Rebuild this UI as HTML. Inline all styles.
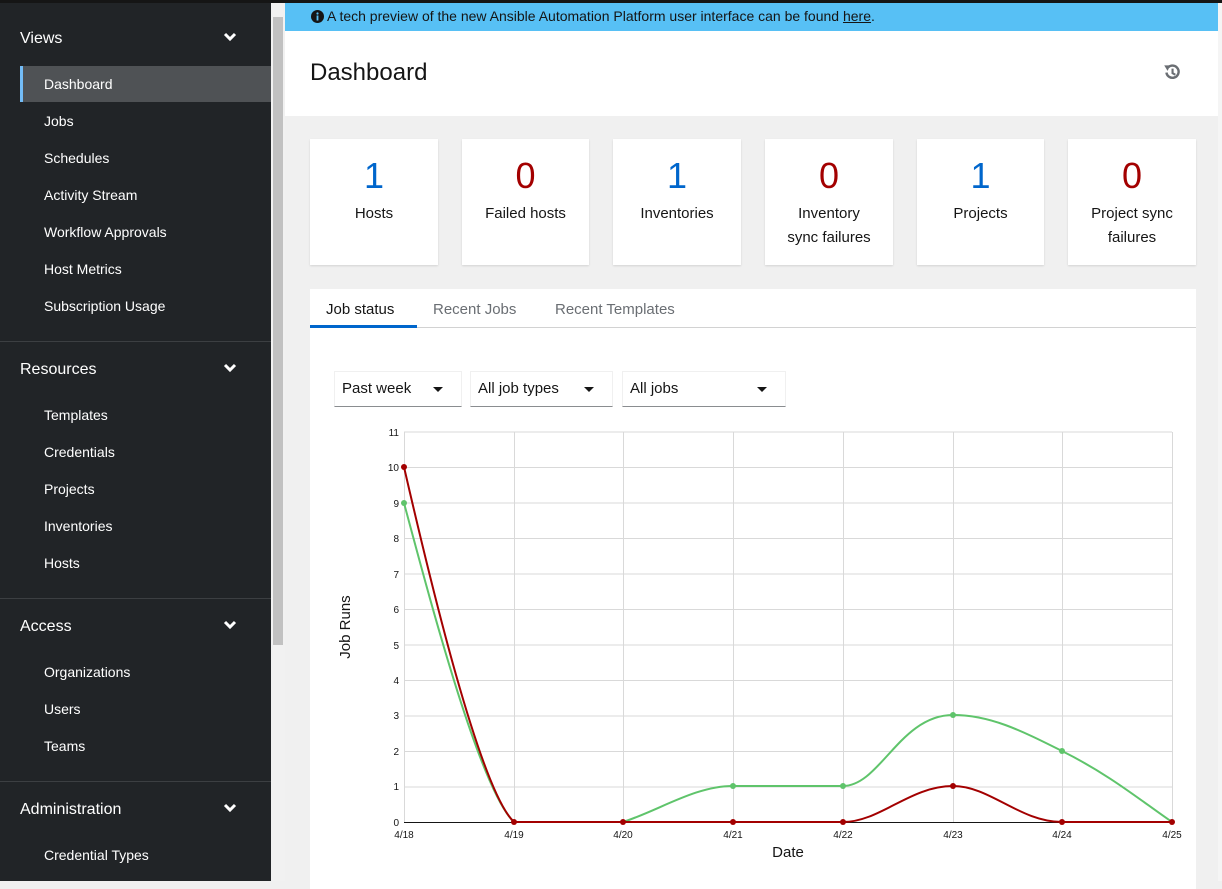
<!DOCTYPE html><html><head><style>
*{box-sizing:border-box;margin:0;padding:0}
body{width:1222px;height:881px;overflow:hidden;background:#f0f0f0;font-family:"Liberation Sans",sans-serif;position:relative}
.topbar{position:absolute;left:0;top:0;width:1222px;height:3px;background:#151515}
.side{position:absolute;left:0;top:3px;width:271px;height:878px;background:#212427;color:#fff}
.sb{position:absolute;left:271px;top:3px;width:14px;height:878px;background:#f1f1f1}
.sb div{position:absolute;left:2px;top:14px;width:10px;height:628px;background:#c1c1c1}
.hd{position:absolute;left:20px;font-size:16px;color:#fff}
.chev{position:absolute;left:223px;width:14px;height:10px}
.it{position:absolute;left:44px;font-size:14px;color:#fff}
.sep{position:absolute;left:0;width:271px;height:1px;background:#3c3f42}
.act{position:absolute;left:20px;top:63px;width:251px;height:36px;background:#4f5255;border-left:3px solid #73bcf7}
.banner{position:absolute;left:285px;top:3px;width:933px;height:28px;background:#57c0f5;font-size:14px;color:#151515;padding:5px 0 0 26px}
.head{position:absolute;left:285px;top:31px;width:933px;height:85px;background:#fff}
.head h1{position:absolute;left:25px;top:28px;font-size:24px;font-weight:normal;color:#151515}
.card{position:absolute;top:139px;height:126px;background:#fff;box-shadow:0 1px 2px rgba(0,0,0,.12);text-align:center;font-size:15px;color:#151515}
.card .n{font-size:36px;font-weight:300;margin-top:15px;height:44px;line-height:44px}
.card .l{line-height:24px;margin-top:4px}
.blue{color:#0066cc}.red{color:#a30000}
.panel{position:absolute;left:310px;top:289px;width:886px;height:600px;background:#fff}
.tab{position:absolute;top:12px;font-size:15px;color:#6a6e73}
.sel{position:absolute;top:82px;height:36px;border:1px solid #f0f0f0;border-bottom:1px solid #8a8d90;font-size:15px;color:#151515;padding:8px 0 0 7px}
.car{position:absolute;top:15px;width:0;height:0;border-left:5px solid transparent;border-right:5px solid transparent;border-top:5px solid #151515}
</style></head><body>
<div class="topbar"></div>
<div class="side">
<div class="hd" style="top:27px">Views</div>
<svg class="chev" style="top:29px" viewBox="0 0 14 10"><path d="M2 2L7 7 12 2" stroke="#fff" stroke-width="3" fill="none"/></svg>
<div class="act"></div>
<div class="it" style="top:73px">Dashboard</div>
<div class="it" style="top:110px">Jobs</div>
<div class="it" style="top:147px">Schedules</div>
<div class="it" style="top:184px">Activity Stream</div>
<div class="it" style="top:221px">Workflow Approvals</div>
<div class="it" style="top:258px">Host Metrics</div>
<div class="it" style="top:295px">Subscription Usage</div>
<div class="sep" style="top:338px"></div>
<div class="hd" style="top:358px">Resources</div>
<svg class="chev" style="top:360px" viewBox="0 0 14 10"><path d="M2 2L7 7 12 2" stroke="#fff" stroke-width="3" fill="none"/></svg>
<div class="it" style="top:404px">Templates</div>
<div class="it" style="top:441px">Credentials</div>
<div class="it" style="top:478px">Projects</div>
<div class="it" style="top:515px">Inventories</div>
<div class="it" style="top:552px">Hosts</div>
<div class="sep" style="top:595px"></div>
<div class="hd" style="top:615px">Access</div>
<svg class="chev" style="top:617px" viewBox="0 0 14 10"><path d="M2 2L7 7 12 2" stroke="#fff" stroke-width="3" fill="none"/></svg>
<div class="it" style="top:661px">Organizations</div>
<div class="it" style="top:698px">Users</div>
<div class="it" style="top:735px">Teams</div>
<div class="sep" style="top:778px"></div>
<div class="hd" style="top:798px">Administration</div>
<svg class="chev" style="top:800px" viewBox="0 0 14 10"><path d="M2 2L7 7 12 2" stroke="#fff" stroke-width="3" fill="none"/></svg>
<div class="it" style="top:844px">Credential Types</div>
</div>
<div class="sb"><div></div></div>
<div class="banner"><svg style="position:absolute;left:26px;top:7px" width="13" height="13" viewBox="0 0 13 13"><circle cx="6.5" cy="6.5" r="6.5" fill="#151515"/><rect x="5.6" y="5.5" width="1.8" height="5" fill="#57c0f5"/><circle cx="6.5" cy="3.5" r="1.1" fill="#57c0f5"/></svg><span style="margin-left:16px">A tech preview of the new Ansible Automation Platform user interface can be found <u>here</u>.</span></div>
<div style="position:absolute;left:1218px;top:3px;width:4px;height:878px;background:#f5f5f5"></div>
<div class="head"><h1>Dashboard</h1>
<svg style="position:absolute;left:877px;top:31px" width="20" height="20" viewBox="0 0 18 18"><path d="M4 9.5A5.5 5.5 0 1 0 5.8 4.6" stroke="#6a6e73" stroke-width="2.2" fill="none"/><path d="M2 3L7.5 3 5 8Z" fill="#6a6e73"/><path d="M9.5 6V10L12 11.5" stroke="#6a6e73" stroke-width="1.9" fill="none"/></svg></div>
<div class="card" style="left:310px;width:128px"><div class="n blue">1</div><div class="l">Hosts</div></div>
<div class="card" style="left:462px;width:127px"><div class="n red">0</div><div class="l">Failed hosts</div></div>
<div class="card" style="left:613px;width:128px"><div class="n blue">1</div><div class="l">Inventories</div></div>
<div class="card" style="left:765px;width:128px"><div class="n red">0</div><div class="l">Inventory<br>sync failures</div></div>
<div class="card" style="left:917px;width:127px"><div class="n blue">1</div><div class="l">Projects</div></div>
<div class="card" style="left:1068px;width:128px"><div class="n red">0</div><div class="l">Project sync<br>failures</div></div>
<div class="panel">
<div class="tab" style="left:16px;color:#151515">Job status</div>
<div class="tab" style="left:123px">Recent Jobs</div>
<div class="tab" style="left:245px">Recent Templates</div>
<div style="position:absolute;left:0;top:38px;width:886px;height:1px;background:#d2d2d2"></div>
<div style="position:absolute;left:0;top:36px;width:107px;height:3px;background:#0066cc"></div>
<div class="sel" style="left:24px;width:128px">Past week<div class="car" style="left:98px"></div></div>
<div class="sel" style="left:132px;width:171px;left:160px;width:143px">All job types<div class="car" style="left:113px"></div></div>
<div class="sel" style="left:312px;width:164px">All jobs<div class="car" style="left:134px"></div></div>
</div>
<svg style="position:absolute;left:0;top:0" width="1222" height="881">
<g stroke="#d9d9d9" stroke-width="1">
<path d="M404 432H1172M404 467.5H1172M404 503H1172M404 538.5H1172M404 574H1172M404 609.5H1172M404 645H1172M404 680.5H1172M404 716H1172M404 751.5H1172M404 787H1172"/>
<path d="M404.5 432V822M514.5 432V822M623.5 432V822M733.5 432V822M843.5 432V822M953.5 432V822M1062.5 432V822M1172.5 432V822"/>
</g>
<path d="M404 822.5H1172" stroke="#151515" stroke-width="1"/>
<g font-size="10" fill="#151515" text-anchor="end" font-family="Liberation Sans">
<text x="399" y="436">11</text><text x="399" y="471">10</text><text x="399" y="507">9</text><text x="399" y="542">8</text><text x="399" y="578">7</text><text x="399" y="613">6</text><text x="399" y="649">5</text><text x="399" y="684">4</text><text x="399" y="719">3</text><text x="399" y="755">2</text><text x="399" y="790">1</text><text x="399" y="826">0</text>
</g>
<g font-size="10" fill="#151515" text-anchor="middle" font-family="Liberation Sans">
<text x="404" y="838">4/18</text><text x="514" y="838">4/19</text><text x="623" y="838">4/20</text><text x="733" y="838">4/21</text><text x="843" y="838">4/22</text><text x="953" y="838">4/23</text><text x="1062" y="838">4/24</text><text x="1172" y="838">4/25</text>
</g>
<text x="788" y="857" font-size="15" text-anchor="middle" fill="#151515" font-family="Liberation Sans">Date</text>
<text transform="translate(350 627) rotate(-90)" font-size="15" text-anchor="middle" fill="#151515" font-family="Liberation Sans">Job Runs</text>
<path d="M404 503C430 600 480 790 514 822L623 822C660 810 695 786 733 786L843 786C880 786 900 715 953 715C990 715 1020 730 1062 751C1110 775 1140 800 1172 822" stroke="#5fc46b" stroke-width="2" fill="none"/>
<path d="M404 467C430 580 480 790 514 822L843 822C880 822 910 786 953 786C990 786 1020 822 1062 822L1172 822" stroke="#a30000" stroke-width="2" fill="none"/>
<g fill="#5fc46b"><circle cx="404" cy="503" r="3"/><circle cx="733" cy="786" r="3"/><circle cx="843" cy="786" r="3"/><circle cx="953" cy="715" r="3"/><circle cx="1062" cy="751" r="3"/></g>
<g fill="#a30000"><circle cx="404" cy="467" r="3"/><circle cx="514" cy="822" r="3"/><circle cx="623" cy="822" r="3"/><circle cx="733" cy="822" r="3"/><circle cx="843" cy="822" r="3"/><circle cx="953" cy="786" r="3"/><circle cx="1062" cy="822" r="3"/><circle cx="1172" cy="822" r="3"/></g>
</svg>
</body></html>
